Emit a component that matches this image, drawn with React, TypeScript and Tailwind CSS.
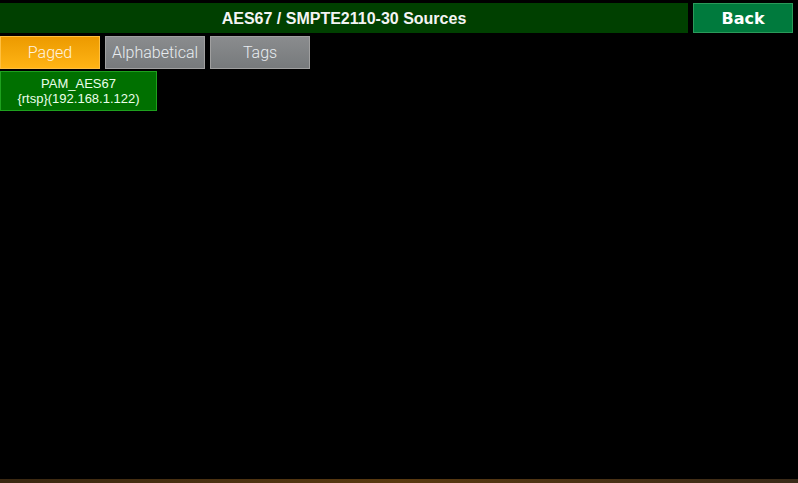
const TABS = [
  { label: "Paged", active: true },
  { label: "Alphabetical", active: false },
  { label: "Tags", active: false },
];

export default function App() {
  return (
    <div className="w-[798px] h-[483px] bg-black flex flex-col overflow-hidden">
      <div className="flex gap-[5px] pt-[3px] h-[33px]">
        <div className="w-[688px] bg-[#004000] flex items-center justify-center pt-[1px] text-[16px] font-bold text-[#f4f4f4] font-['Liberation_Sans',Arial,sans-serif]">
          AES67 / SMPTE2110-30 Sources
        </div>
        <button className="w-[100px] bg-[#007a3d] border border-[#2a9a5a] flex items-center justify-center pt-[1px] text-[16px] font-bold text-white font-['DejaVu_Sans',sans-serif]">
          Back
        </button>
      </div>

      <div className="flex gap-[5px] mt-[3px] h-[33px]">
        {TABS.map((t) => (
          <div
            key={t.label}
            className={
              t.active
                ? "w-[100px] flex items-center justify-center pt-[1px] border border-[#ffc040] bg-gradient-to-b from-[#ec9a00] to-[#ffb414] text-[16px] text-[#fff4e0] font-['Roboto',sans-serif] font-light"
                : "w-[100px] flex items-center justify-center pt-[1px] border border-[#a0a0a0] bg-gradient-to-b from-[#8a8c8e] to-[#777a7c] text-[16px] text-[#e8ecf0] font-['Roboto',sans-serif] font-light"
            }
          >
            {t.label}
          </div>
        ))}
      </div>

      <div className="mt-[2px]">
        <div className="w-[157px] h-[40px] bg-[#007000] border border-[#1ea01e] flex flex-col items-center justify-center leading-[15px] text-[13px] text-[#eaffea] font-['Liberation_Sans',Arial,sans-serif]">
          <span>PAM_AES67</span>
          <span>{"{rtsp}(192.168.1.122)"}</span>
        </div>
      </div>

      <div className="flex-1" />
      <div className="h-[4px] bg-gradient-to-r from-[#3a2812] via-[#5a3a10] to-[#3a2a18]" />
    </div>
  );
}
